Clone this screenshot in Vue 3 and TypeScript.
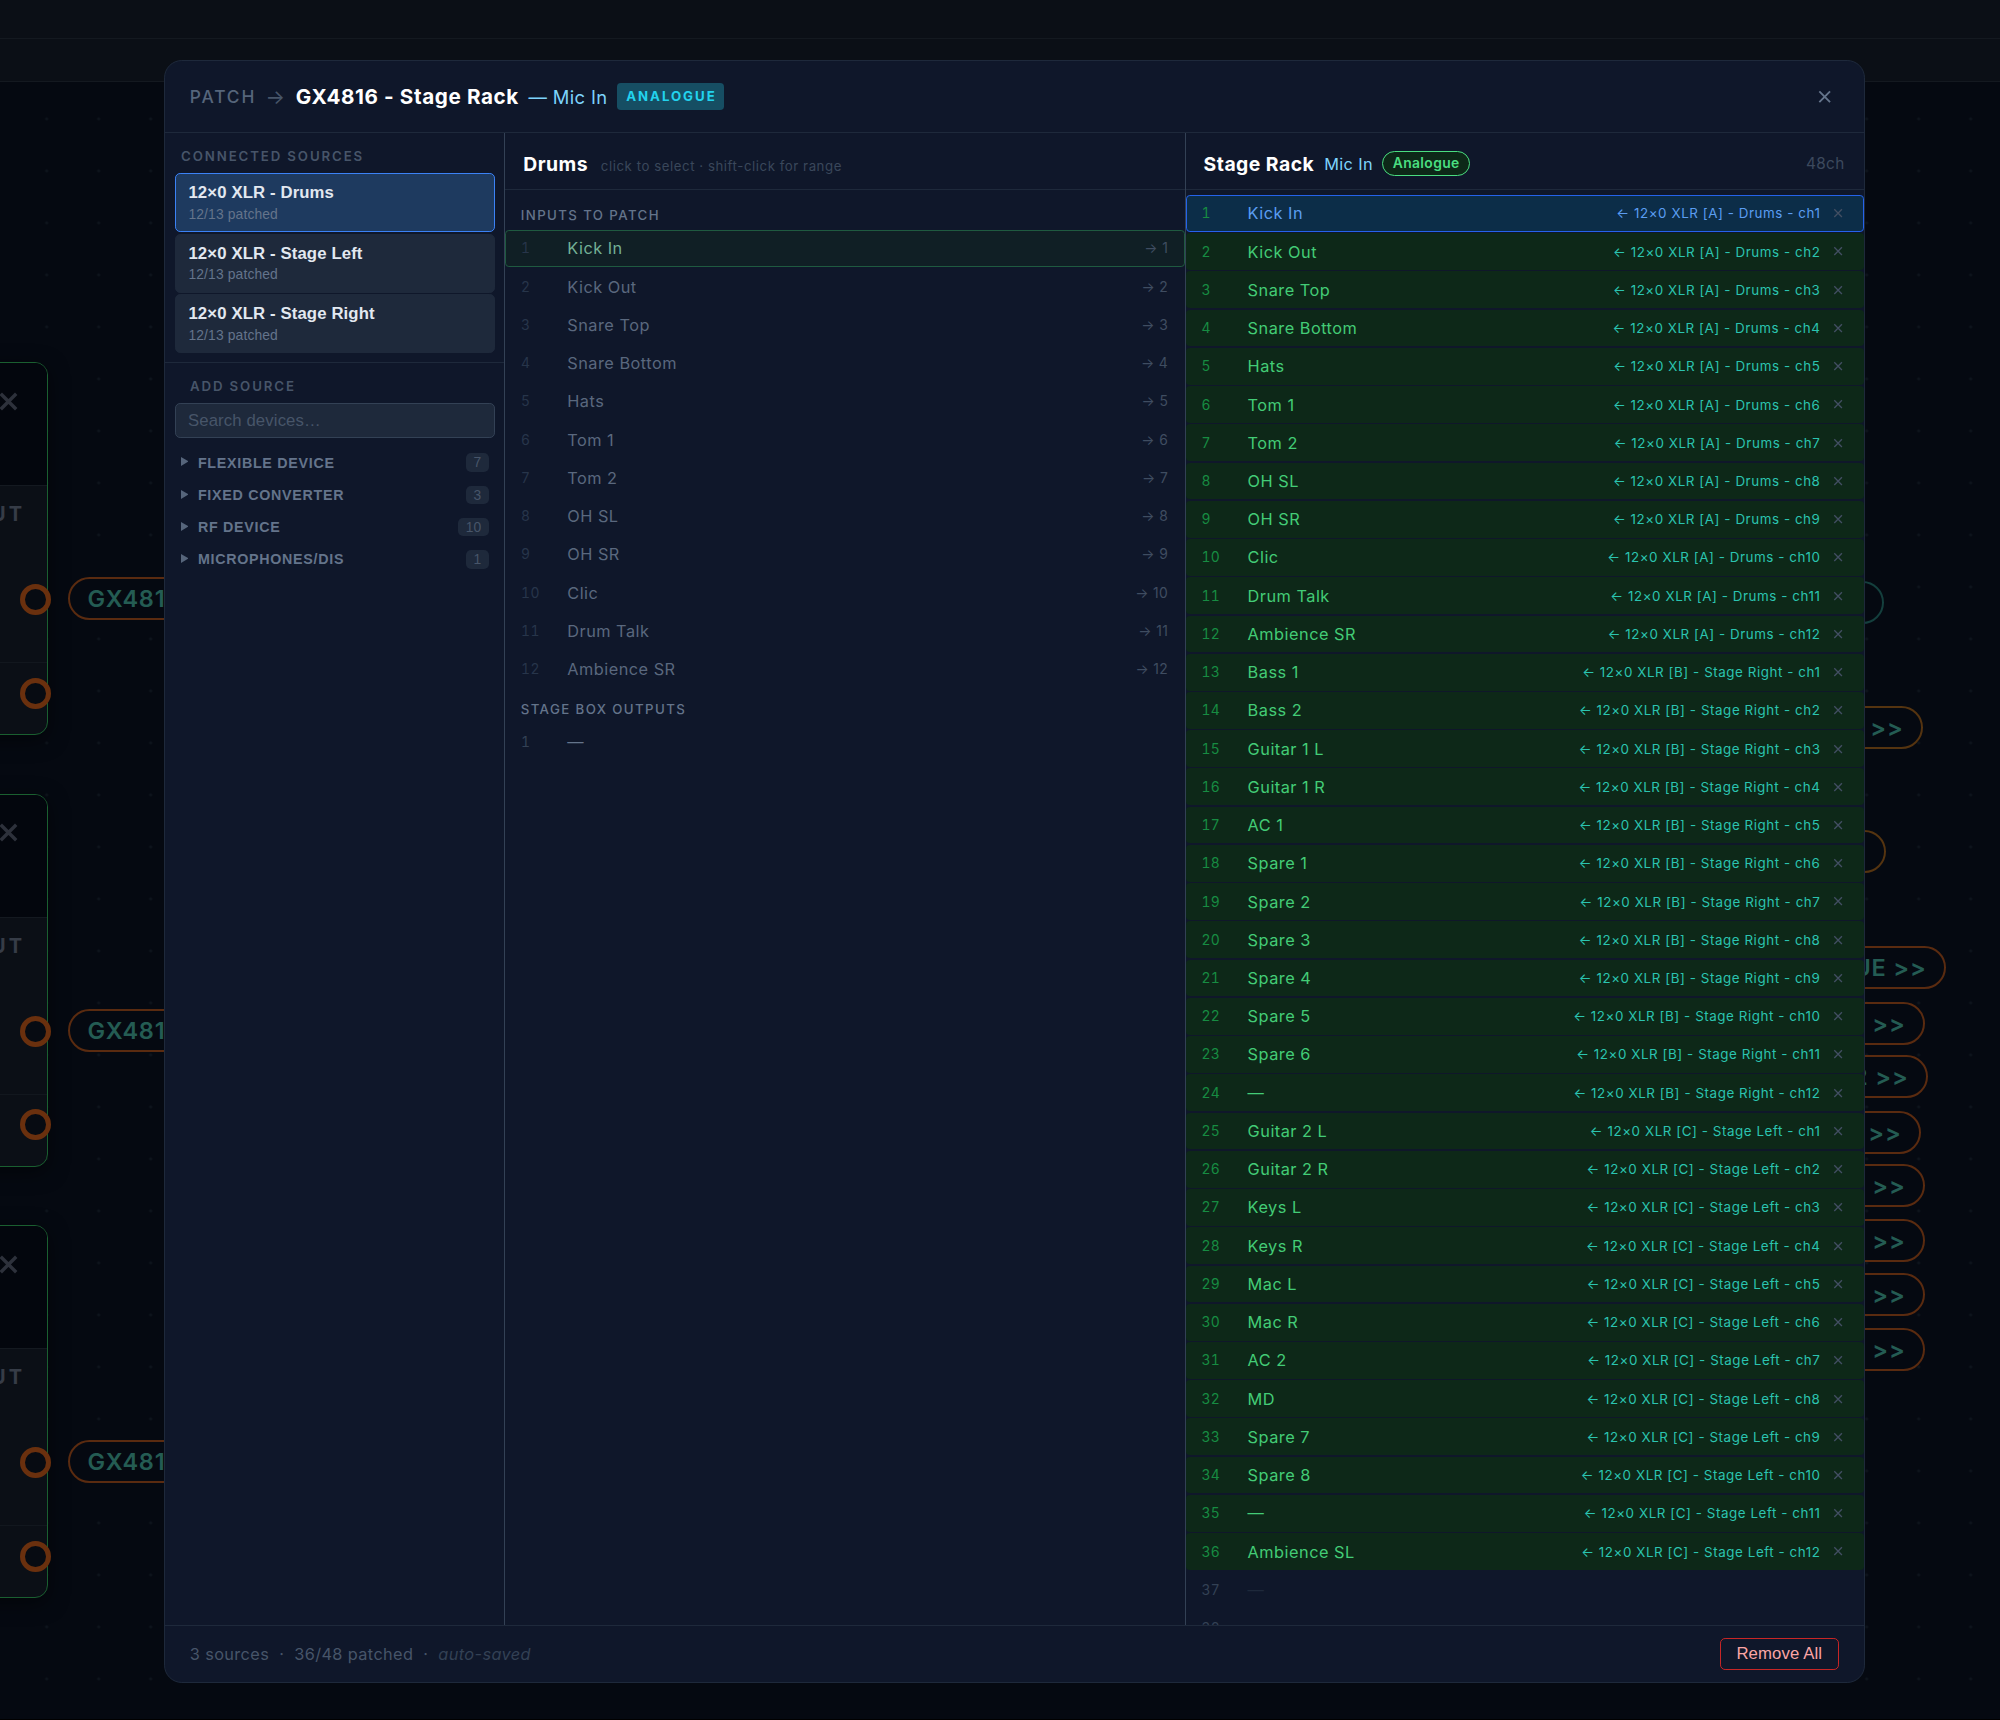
<template>
  <div class="screen">
    <div class="topbar topbar-main"></div>
    <div class="topbar topbar-tools"></div>

    <div class="canvas">
      <div
        v-for="top in nodeTops"
        :key="top"
        class="node"
        :style="{ top: top + 'px' }"
      >
        <div class="node-head">
          <svg class="node-close" viewBox="0 0 16 16">
            <path d="M1.5 1.5 14.5 14.5M14.5 1.5 1.5 14.5" />
          </svg>
        </div>
        <div class="node-body">
          <span class="node-label">OUTPUT</span>
        </div>
        <span class="port port-upper"></span>
        <span class="port port-lower"></span>
        <span class="tag tag-left">GX4816</span>
      </div>

      <span
        v-for="tag in tags"
        :key="tag.top"
        class="tag tag-right"
        :class="tag.tone"
        :style="{ top: tag.top + 'px', width: tag.right - 1700 + 'px' }"
        >{{ tag.text }}</span
      >
    </div>
    <div class="backdrop-edge"></div>

    <div class="modal">
      <header class="modal-header">
        <span class="crumb">PATCH</span>
        <span class="crumb-arrow">→</span>
        <span class="device">GX4816 - Stage Rack</span>
        <span class="port-name">— Mic In</span>
        <span class="type-badge">ANALOGUE</span>
        <button class="close">
          <svg viewBox="0 0 10 10"><path d="M1 1 9 9M9 1 1 9" /></svg>
        </button>
      </header>

      <div class="columns">
        <aside class="sources">
          <div class="side-title">CONNECTED SOURCES</div>
          <div class="source-list">
            <button
              v-for="source in sources"
              :key="source"
              class="source"
              :class="{ active: source === activeSource }"
              @click="activeSource = source"
            >
              <span class="source-name">12×0 XLR - {{ source }}</span>
              <span class="source-meta">12/13 patched</span>
            </button>
          </div>
          <div class="add-source">
            <div class="side-title add-title">ADD SOURCE</div>
            <input v-model="search" class="search" placeholder="Search devices…" />
            <button v-for="cat in categories" :key="cat.name" class="category">
              <svg class="caret" viewBox="0 0 6 7"><path d="M0 0 6 3.5 0 7z" /></svg>
              <span class="category-name">{{ cat.name }}</span>
              <span class="category-count">{{ cat.count }}</span>
            </button>
          </div>
        </aside>

        <section class="column">
          <div class="column-header">
            <span class="column-title">Drums</span>
            <span class="hint">click to select · shift-click for range</span>
          </div>
          <div class="rows">
            <div class="group-title">INPUTS TO PATCH</div>
            <div
              v-for="(name, i) in inputs"
              :key="name"
              class="row input-row"
              :class="{ picked: i === 0 }"
            >
              <span class="num">{{ i + 1 }}</span>
              <span class="name">{{ name }}</span>
              <span class="target">→ {{ i + 1 }}</span>
            </div>
            <div class="group-title">STAGE BOX OUTPUTS</div>
            <div class="row output-row">
              <span class="num">1</span>
              <span class="name">—</span>
            </div>
          </div>
        </section>

        <section class="column">
          <div class="column-header">
            <span class="column-title">Stage Rack</span>
            <span class="column-port">Mic In</span>
            <span class="pill">Analogue</span>
            <span class="total">48ch</span>
          </div>
          <div class="rows">
            <div
              v-for="ch in channels"
              :key="ch.num"
              class="row"
              :class="{ patched: ch.from, current: ch.num === 1 }"
            >
              <span class="num">{{ ch.num }}</span>
              <span class="name">{{ ch.name }}</span>
              <template v-if="ch.from">
                <span class="from">← {{ ch.from }}</span>
                <svg class="unpatch" viewBox="0 0 8 8">
                  <path d="M1 1 7 7M7 1 1 7" />
                </svg>
              </template>
            </div>
          </div>
        </section>
      </div>

      <footer class="modal-footer">
        <span class="summary"
          >3 sources &nbsp;·&nbsp; 36/48 patched &nbsp;·&nbsp;
          <em>auto-saved</em></span
        >
        <button class="remove-all">Remove All</button>
      </footer>
    </div>
  </div>
</template>

<script setup lang="ts">
import { ref } from "vue";

interface Channel {
  num: number;
  name: string;
  from?: string;
}

const search = ref("");
const activeSource = ref("Drums");
const sources = ["Drums", "Stage Left", "Stage Right"];

const categories = [
  { name: "FLEXIBLE DEVICE", count: 7 },
  { name: "FIXED CONVERTER", count: 3 },
  { name: "RF DEVICE", count: 10 },
  { name: "MICROPHONES/DIS", count: 1 },
];

const inputs = [
  "Kick In", "Kick Out", "Snare Top", "Snare Bottom", "Hats", "Tom 1",
  "Tom 2", "OH SL", "OH SR", "Clic", "Drum Talk", "Ambience SR",
];

// each stage box feeds a block of twelve rack inputs
const blocks = [
  { box: "12×0 XLR [A] - Drums", names: inputs },
  {
    box: "12×0 XLR [B] - Stage Right",
    names: [
      "Bass 1", "Bass 2", "Guitar 1 L", "Guitar 1 R", "AC 1", "Spare 1",
      "Spare 2", "Spare 3", "Spare 4", "Spare 5", "Spare 6", "—",
    ],
  },
  {
    box: "12×0 XLR [C] - Stage Left",
    names: [
      "Guitar 2 L", "Guitar 2 R", "Keys L", "Keys R", "Mac L", "Mac R",
      "AC 2", "MD", "Spare 7", "Spare 8", "—", "Ambience SL",
    ],
  },
];

const channels: Channel[] = blocks.flatMap((block, b) =>
  block.names.map((name, i) => ({
    num: b * 12 + i + 1,
    name,
    from: `${block.box} - ch${i + 1}`,
  })),
);
for (let num = 37; num <= 48; num++) {
  channels.push({ num, name: "—" });
}

const nodeTops = [362, 793.5, 1225];

const tags = [
  { top: 581, right: 1884, text: "", tone: "teal" },
  { top: 706, right: 1923, text: ">>", tone: "amber" },
  { top: 830, right: 1885.5, text: "", tone: "amber" },
  { top: 946, right: 1946, text: "BLUE >>", tone: "" },
  { top: 1001.5, right: 1925, text: ">>", tone: "" },
  { top: 1055, right: 1928, text: "2 >>", tone: "" },
  { top: 1110.5, right: 1921, text: ">>", tone: "" },
  { top: 1164, right: 1925, text: ">>", tone: "" },
  { top: 1219, right: 1925, text: ">>", tone: "" },
  { top: 1273, right: 1925, text: ">>", tone: "" },
  { top: 1328, right: 1925, text: ">>", tone: "" },
];
</script>

<style>
body {
  margin: 0;
  background: #050911;
}
</style>

<style scoped>
.screen {
  position: relative;
  display: flex;
  flex-direction: column;
  width: 2000px;
  height: 1720px;
  overflow: hidden;
  background: #050911;
  font-family: Inter, "Liberation Sans", sans-serif;
}

.screen * {
  box-sizing: border-box;
}

button,
input {
  margin: 0;
  border: none;
  outline: none;
  background: none;
  font-family: "Liberation Sans", Arial, sans-serif;
  text-align: left;
}

.topbar {
  flex: none;
  background: #0b0f16;
  border-bottom: 1px solid #141920;
}

.topbar-main {
  height: 39px;
}

.topbar-tools {
  height: 43px;
}

.canvas {
  flex: 1;
  background-image: radial-gradient(circle, #0e141c 1.3px, transparent 1.8px);
  background-size: 52px 52px;
  background-position: 20.7px 10.9px;
}

.backdrop-edge {
  flex: none;
  height: 1px;
  background: #000;
}

/* canvas nodes behind the dialog */
.node {
  position: absolute;
  left: -300px;
  width: 348px;
  height: 373px;
  border: 1.5px solid #1a5f30;
  border-radius: 13px;
  background: #0b0f16;
  box-shadow: 0 5px 20px rgba(0, 0, 0, 0.5);
}

.node-head {
  display: flex;
  align-items: flex-start;
  justify-content: flex-end;
  height: 123px;
  padding: 28.5px 29.5px 0 0;
  border-bottom: 1px solid #141920;
  border-radius: 12px 12px 0 0;
  background: #03060d;
}

.node-close {
  width: 19px;
  height: 19px;
  fill: none;
  stroke: #2d313b;
  stroke-width: 2.9;
}

.node-body {
  height: 177px;
  padding: 16px 22px 0 0;
  border-bottom: 1px solid #12171e;
  text-align: right;
}

.node-label {
  color: #363c47;
  font-size: 20px;
  font-weight: 700;
  letter-spacing: 3px;
}

.port {
  position: absolute;
  right: -3.5px;
  width: 31px;
  height: 31px;
  border: 5px solid #6a300e;
  border-radius: 50%;
  background: #070b12;
}

.port-upper {
  top: 221px;
}

.port-lower {
  top: 314.5px;
}

.tag {
  position: absolute;
  height: 43px;
  border: 2px solid #5a2b10;
  border-radius: 22px;
  background: #050911;
  color: #245c53;
  font-size: 23.5px;
  font-weight: 600;
  line-height: 39.5px;
  letter-spacing: 0.8px;
  white-space: nowrap;
}

.tag-left {
  left: 367px;
  top: 214px;
  width: 200px;
  padding-left: 17.5px;
}

.tag-right {
  left: 1700px;
  padding-right: 17.5px;
  text-align: right;
}

.tag.teal {
  border-color: #143f3d;
}

.tag.amber {
  border-color: #553410;
}

/* dialog */
.modal {
  position: absolute;
  left: 128.6px;
  top: 47.2px;
  display: flex;
  flex-direction: column;
  width: 1333.4px;
  height: 1272px;
  overflow: hidden;
  border: 1px solid #1e293b;
  border-radius: 14px;
  background: #0f172a;
  letter-spacing: 0.3px;
  zoom: 1.2755;
}

.modal-header {
  display: flex;
  flex: none;
  align-items: center;
  height: 56.3px;
  padding: 0 19.4px;
  border-bottom: 1px solid #1e293b;
}

.crumb {
  color: #56657b;
  font-size: 13.6px;
  font-weight: 500;
  letter-spacing: 1.5px;
}

.crumb-arrow {
  margin-left: 7.3px;
  color: #475569;
  font-size: 16px;
}

.device {
  margin-left: 8px;
  color: #fff;
  font-size: 16.2px;
  font-weight: 700;
  letter-spacing: 0.47px;
}

.port-name {
  margin-left: 7.5px;
  color: #7dd3fc;
  font-size: 14.4px;
}

.type-badge {
  margin-left: 7.7px;
  padding: 0 5.6px 0 7px;
  border-radius: 3px;
  background: #164e63;
  color: #22d3ee;
  font-size: 10.4px;
  font-weight: 700;
  line-height: 21.2px;
  letter-spacing: 1.52px;
}

.close {
  display: flex;
  margin-left: auto;
  padding: 6px;
}

.close svg {
  width: 10.5px;
  height: 10.5px;
  fill: none;
  stroke: #64748b;
  stroke-width: 1.4;
}

.columns {
  display: grid;
  flex: 1;
  grid-template-rows: minmax(0, 1fr);
  grid-template-columns: 265.9px 533.4px 1fr;
  min-height: 0;
}

.side-title {
  padding: 12px 12px 6.6px 12.6px;
  color: #475569;
  font-size: 10.4px;
  font-weight: 600;
  line-height: 13px;
  letter-spacing: 1.47px;
}

.source-list {
  display: flex;
  flex-direction: column;
  gap: 1.4px;
  padding: 0 7.4px 6.8px 7.8px;
}

.source {
  display: flex;
  flex-direction: column;
  height: 46.1px;
  padding: 6.8px 9.8px;
  border: 1px solid #1e293b;
  border-radius: 4px;
  background: #1e293b;
}

.source.active {
  border-color: #3b82f6;
  background: #1e3a5f;
}

.source-name {
  color: #e2e8f0;
  font-size: 13.12px;
  font-weight: 700;
  line-height: 15px;
  letter-spacing: 0.1px;
}

.source-meta {
  margin-top: 3px;
  color: #64748b;
  font-size: 10.88px;
  line-height: 13px;
  letter-spacing: 0.1px;
}

.add-source {
  display: flex;
  flex-direction: column;
  padding: 0 7.4px 0 7.8px;
  border-top: 1px solid #1e293b;
}

.add-title {
  padding-left: 11.8px;
}

.search {
  height: 27.2px;
  margin-bottom: 6.8px;
  padding: 1px 9.4px 0;
  border: 1px solid #334155;
  border-radius: 4px;
  background: #1e293b;
  color: #e2e8f0;
  font-size: 13.12px;
  letter-spacing: 0.1px;
}

.search::placeholder {
  color: #475569;
}

.category {
  display: flex;
  align-items: center;
  height: 25.3px;
  padding: 0 4.6px;
}

.caret {
  width: 6px;
  height: 7px;
  margin-right: 7.4px;
  margin-bottom: 1.4px;
  fill: #56657b;
}

.category-name {
  flex: 1;
  color: #64748b;
  font-size: 11.2px;
  font-weight: 700;
  letter-spacing: 0.56px;
}

.category-count {
  padding: 0 6px;
  border-radius: 4px;
  background: #1e293b;
  color: #475569;
  font-size: 10.88px;
  line-height: 14.4px;
}

.column {
  display: flex;
  flex-direction: column;
  min-width: 0;
  border-left: 1px solid #334155;
}

.column-header {
  display: flex;
  flex: none;
  align-items: center;
  height: 44.6px;
  padding: 4.4px 15px 0 14.2px;
  border-bottom: 1px solid #1e293b;
}

.column-title {
  color: #fff;
  font-size: 15.2px;
  font-weight: 700;
  letter-spacing: 0.36px;
}

.hint {
  margin: 3px 0 0 10px;
  color: #3a475b;
  font-size: 10.4px;
  letter-spacing: 0.43px;
}

.column-port {
  margin-left: 7.8px;
  color: #7dd3fc;
  font-size: 12.8px;
}

.pill {
  margin-left: 7px;
  padding: 0 7.6px;
  border: 1px solid #4ade80;
  border-radius: 10px;
  background: #0d2818;
  color: #4ade80;
  font-size: 10.88px;
  font-weight: 600;
  line-height: 18.4px;
}

.total {
  margin-left: auto;
  color: #3c495d;
  font-size: 12px;
}

.rows {
  display: flex;
  flex: 1;
  flex-direction: column;
  gap: 1.18px;
  min-height: 0;
  padding-top: 4px;
  overflow: hidden;
}

.group-title {
  flex: none;
  padding: 9.4px 12.2px 4px;
  color: #64748b;
  font-size: 10.4px;
  font-weight: 500;
  line-height: 13px;
  letter-spacing: 1.1px;
}

.row {
  display: flex;
  flex: none;
  align-items: center;
  height: 28.8px;
  padding: 0 12px 0 11.7px;
  border: 1px solid transparent;
  border-radius: 3px;
  color: #1e293b;
}

.num {
  width: 36.2px;
  color: #334155;
  font-size: 10.88px;
  font-variant-numeric: tabular-nums;
}

.name {
  flex: 1;
  font-size: 12.8px;
  letter-spacing: 0.38px;
}

.input-row {
  color: #5a687e;
}

.input-row .num {
  color: #27354a;
}

.input-row.picked {
  border-color: #1f5a40;
  background: #101f25;
  color: #74b096;
}

.output-row {
  color: #64748b;
}

.target {
  color: #3f4d61;
  font-size: 10.88px;
}

.patched {
  background: #0d2818;
  color: #43cc76;
}

.patched .num {
  color: #178c42;
}

.from {
  color: #2bc4b0;
  font-size: 10.5px;
  letter-spacing: 0.44px;
}

.unpatch {
  width: 8px;
  height: 8px;
  margin: 0 3.4px 0 9.8px;
  fill: none;
  stroke: #424e62;
  stroke-width: 1.05;
}

.patched.current {
  border-color: #2563eb;
  background: #0c2d48;
  color: #5b9df2;
}

.current .from {
  color: #5b9df2;
}

.modal-footer {
  display: flex;
  flex: none;
  align-items: center;
  justify-content: space-between;
  height: 44.6px;
  padding: 0 19.4px;
  border-top: 1px solid #1e293b;
}

.summary {
  color: #475569;
  font-size: 12.8px;
}

.summary em {
  color: #334155;
}

.remove-all {
  height: 25.2px;
  padding: 0 12.4px;
  border: 1px solid #c72626;
  border-radius: 4px;
  color: #fca5a5;
  font-size: 13.12px;
  letter-spacing: 0.1px;
}
</style>
